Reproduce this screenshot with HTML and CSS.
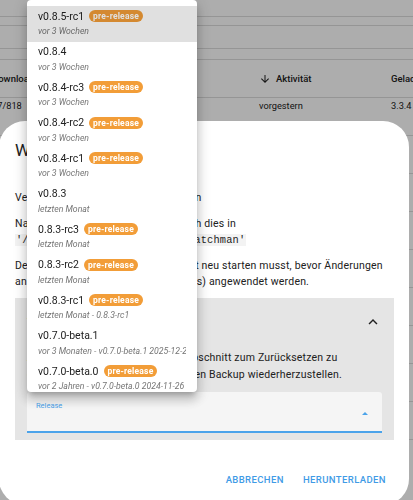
FILE: index.html
```html
<!DOCTYPE html>
<html lang="de">
<head>
  <meta charset="UTF-8">
  <meta name="viewport" content="width=device-width, initial-scale=1.0">
  <title>Watchman</title>
  <link rel="stylesheet" href="styles.css">
</head>
<body>

<!-- repository table behind the dialog -->
<div class="page">
  <div class="rule r1"></div>
  <div class="rule r2"></div>
  <div class="rule r3"></div>
  <div class="rule r4"></div>
  <div class="table-head">
    <span>Downloads</span>
    <span class="sort-col">
      <svg class="sort-icon" viewBox="0 0 24 24"><path d="M20 12l-1.41-1.41L13 16.17V4h-2v12.17l-5.58-5.59L4 12l8 8 8-8z"/></svg>
      Aktivität
    </span>
    <span>Geladen</span>
  </div>
  <div class="table-row">
    <span>17/818</span>
    <span>vorgestern</span>
    <span>3.3.4</span>
  </div>
  <div class="table-row"></div>
  <div class="table-row"></div>
  <div class="table-row"></div>
  <div class="table-row"></div>
  <div class="table-row"></div>
  <div class="table-row"></div>
  <div class="table-row"></div>
  <div class="table-row"></div>
</div>

<div class="scrim"></div>

<div class="dialog">
  <h2 class="dialog-title">Watchman</h2>
  <p class="first">Version zum Herunterladen auswählen</p>
  <p>Nach dem Herunterladen befindet sich dies in<br>
    <code>'/config/custom_components/watchman'</code></p>
  <p>Denke daran, dass du Home Assistant neu starten musst, bevor Änderungen<br>
    an Integrationen (custom_components) angewendet werden.</p>

  <div class="panel">
    <div class="panel-head">
      <span class="panel-title">Versionen</span>
      <svg class="chevron" viewBox="0 0 24 24"><path d="M12 8l-6 6 1.41 1.41L12 10.83l4.59 4.58L18 14z"/></svg>
    </div>
    <div class="panel-body">
      <p>Alternativ verwende den Backup-Abschnitt zum Zurücksetzen zu<br>
        einem älteren, noch funktionierenden Backup wiederherzustellen.</p>
      <div class="select">
        <span class="select-label">Release</span>
        <span class="select-arrow"></span>
      </div>
    </div>
  </div>

  <div class="actions">
    <button class="text-btn">Abbrechen</button>
    <button class="text-btn">Herunterladen</button>
  </div>
</div>

<!-- open release list of the select -->
<div class="menu">
  <div class="option active">
    <div class="opt-main">v0.8.5-rc1<span class="badge">pre-release</span></div>
    <div class="opt-sub">vor 3 Wochen</div>
  </div>
  <div class="option">
    <div class="opt-main">v0.8.4</div>
    <div class="opt-sub">vor 3 Wochen</div>
  </div>
  <div class="option">
    <div class="opt-main">v0.8.4-rc3<span class="badge">pre-release</span></div>
    <div class="opt-sub">vor 3 Wochen</div>
  </div>
  <div class="option">
    <div class="opt-main">v0.8.4-rc2<span class="badge">pre-release</span></div>
    <div class="opt-sub">vor 3 Wochen</div>
  </div>
  <div class="option">
    <div class="opt-main">v0.8.4-rc1<span class="badge">pre-release</span></div>
    <div class="opt-sub">vor 3 Wochen</div>
  </div>
  <div class="option">
    <div class="opt-main">v0.8.3</div>
    <div class="opt-sub">letzten Monat</div>
  </div>
  <div class="option">
    <div class="opt-main">0.8.3-rc3<span class="badge">pre-release</span></div>
    <div class="opt-sub">letzten Monat</div>
  </div>
  <div class="option">
    <div class="opt-main">0.8.3-rc2<span class="badge">pre-release</span></div>
    <div class="opt-sub">letzten Monat</div>
  </div>
  <div class="option">
    <div class="opt-main">v0.8.3-rc1<span class="badge">pre-release</span></div>
    <div class="opt-sub">letzten Monat - 0.8.3-rc1</div>
  </div>
  <div class="option">
    <div class="opt-main">v0.7.0-beta.1</div>
    <div class="opt-sub">vor 3 Monaten - v0.7.0-beta.1 2025-12-22</div>
  </div>
  <div class="option">
    <div class="opt-main">v0.7.0-beta.0<span class="badge">pre-release</span></div>
    <div class="opt-sub">vor 2 Jahren - v0.7.0-beta.0 2024-11-26</div>
  </div>
</div>

</body>
</html>
```

FILE: styles.css
```css
* {
  box-sizing: border-box;
}

body {
  margin: 0;
  width: 413px;
  height: 500px;
  overflow: hidden;
  font-family: Roboto, "Noto Sans", sans-serif;
  color: #212121;
  background-color: #fff;
}

/* page behind */
.page {
  height: 500px;
}

.rule {
  border-bottom: 1px solid #dcdcdc;
}
.r1 { height: 17px; }
.r2 { height: 9px; }
.r3 { height: 23px; }
.r4 { height: 11px; }

.table-head,
.table-row {
  display: grid;
  grid-template-columns: 267px 132px 80px;
  margin-left: -8px;
  border-bottom: 1px solid #dcdcdc;
  white-space: nowrap;
}

.table-head {
  height: 38px;
  align-items: center;
  font-size: 9.5px;
  font-weight: 500;
}

.table-row {
  height: 38px;
  padding-top: 2px;
  font-size: 9.25px;
}

.sort-col {
  display: flex;
  align-items: center;
  gap: 5px;
}

.sort-icon {
  width: 12px;
  height: 12px;
  fill: #212121;
}

.scrim {
  position: fixed;
  top: 0;
  left: 0;
  right: 0;
  bottom: 0;
  background-color: rgba(0, 0, 0, 0.32);
}

/* dialog */
.dialog {
  position: absolute;
  left: -1px;
  top: 121px;
  width: 410px;
  height: 384px;
  padding: 18px 15px 0 16px;
  background-color: #fff;
  border-radius: 26px;
}

.dialog-title {
  margin: 0;
  font-size: 17px;
  font-weight: 400;
  line-height: 22px;
}

.dialog p {
  margin: 0 0 10px;
  font-size: 10.5px;
  line-height: 16px;
  letter-spacing: 0.19px;
}

.dialog p.first {
  margin-top: 29px;
}

code {
  font-family: "Liberation Mono", "DejaVu Sans Mono", monospace;
  font-size: 10.3px;
  background-color: #f3f3f3;
  padding: 0 1px;
}

.panel {
  margin-top: -2px;
  background-color: #e5e5e5;
}

.panel-head {
  height: 48px;
  display: flex;
  align-items: center;
  justify-content: space-between;
  padding: 0 12px;
  font-size: 11px;
}

.chevron {
  width: 18px;
  height: 18px;
  fill: #212121;
}

.panel-body {
  padding: 4px 12px 7px;
}

.dialog .panel-body p {
  margin: 0 0 9px;
  line-height: 16.5px;
}

.select {
  height: 41px;
  display: flex;
  justify-content: space-between;
  padding: 9px 14px 0 9px;
  background-color: #f5f5f5;
  border-radius: 3px 3px 0 0;
  border-bottom: 2px solid #4ba3ea;
}

.select-label {
  font-size: 7.5px;
  line-height: 10px;
  color: #4ba3ea;
}

.select-arrow {
  margin-top: 11px;
  width: 0;
  height: 0;
  border-left: 3.5px solid transparent;
  border-right: 3.5px solid transparent;
  border-bottom: 3.5px solid #4ba3ea;
}

.actions {
  display: flex;
  justify-content: flex-end;
  gap: 3px;
  margin-top: 26px;
}

.text-btn {
  height: 27px;
  padding: 0 8px;
  border: none;
  background: none;
  font-family: Roboto, sans-serif;
  font-size: 9.5px;
  font-weight: 500;
  letter-spacing: 0.4px;
  text-transform: uppercase;
  color: #3f9be6;
  cursor: pointer;
}

/* release dropdown */
.menu {
  position: absolute;
  left: 27px;
  top: 0;
  width: 170px;
  height: 392px;
  padding-top: 6px;
  overflow: hidden;
  background-color: #fff;
  border-radius: 4px;
  box-shadow: 0 5px 5px -3px rgba(0, 0, 0, 0.2),
              0 8px 10px 1px rgba(0, 0, 0, 0.14),
              0 3px 14px 2px rgba(0, 0, 0, 0.12);
}

.option {
  position: relative;
  height: 35.5px;
  padding: 2px 11px 0;
}

.option.active::after {
  content: "";
  position: absolute;
  top: 0;
  left: 0;
  right: 0;
  bottom: 0;
  background-color: rgba(0, 0, 0, 0.12);
}

.opt-main {
  display: flex;
  align-items: center;
  height: 16px;
  font-size: 10.5px;
  white-space: nowrap;
}

.badge {
  margin-left: 5px;
  height: 12px;
  padding: 0 4px;
  border-radius: 6px;
  background-color: #f29d38;
  color: #fff;
  font-size: 8.5px;
  font-weight: 700;
  line-height: 12px;
  letter-spacing: 0.2px;
}

.opt-sub {
  font-size: 8.7px;
  font-style: italic;
  line-height: 14px;
  color: #757575;
  white-space: nowrap;
  overflow: hidden;
}
```
